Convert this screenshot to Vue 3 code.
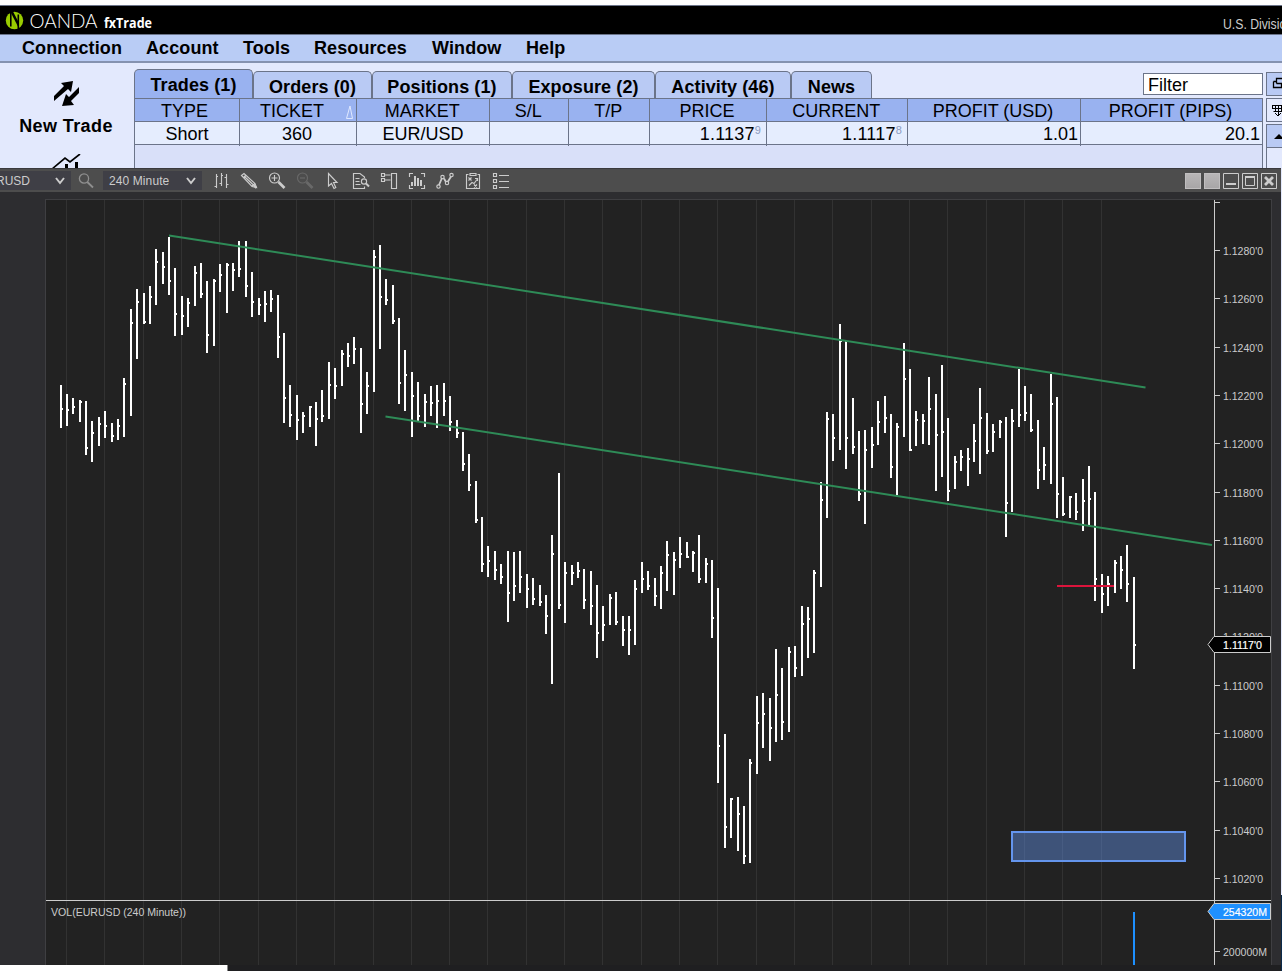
<template>
  <div class="desktop">
    <header class="title-bar">
      <svg class="brand" width="160" height="27" viewBox="0 0 160 27">
        <circle cx="14.5" cy="14.5" r="8.7" fill="#9c0" />
        <path d="M10.8 5.500V20.500M18.300 8.500V24" fill="none" stroke="#000" stroke-width="1.6" />
        <path d="M10.500 6L19 22.500V17L13 5.600Z" fill="#000" />
        <text x="29.5" y="21.6" class="brand-name" textLength="68" lengthAdjust="spacingAndGlyphs">OANDA</text>
        <text x="104" y="22" class="brand-product" textLength="48" lengthAdjust="spacingAndGlyphs">fxTrade</text>
      </svg>
      <svg class="division" width="60" height="27" viewBox="0 0 60 27">
        <text x="1" y="23" textLength="70" lengthAdjust="spacingAndGlyphs">U.S. Division</text>
      </svg>
    </header>

    <nav class="menu-bar">
      <span v-for="item in menu" :key="item">{{ item }}</span>
    </nav>

    <section class="workspace">
      <aside class="sidebar">
        <svg class="trade-icon" width="26" height="26" viewBox="0 0 26 26">
          <path d="M0 15L10 5L7 2L19 0L17 11L14 8L0 20Z" />
          <path d="M25 6L15 16L12 13L8 25L20 24L17 20L25 12Z" />
        </svg>
        <b>New Trade</b>
        <svg class="chart-icon" width="30" height="16" viewBox="0 0 30 16">
          <path d="M0 15L13 4L18 8L28 0" fill="none" stroke="#000" stroke-width="1.7" />
          <path d="M13 10h3v6h-3zM23 8h3v8h-3z" />
        </svg>
      </aside>

      <main class="main">
        <div class="tab-row">
          <div
            v-for="(tab, i) in tabs"
            :key="tab"
            class="tab"
            :class="{ active: i === 0 }"
          >{{ tab }}</div>
          <div class="filter">Filter</div>
        </div>
        <div class="table">
          <div v-for="(col, i) in columns" :key="col.name" class="col">
            <div class="cell head">
              {{ col.name }}
              <svg v-if="i === 1" class="sort" width="7" height="14" viewBox="0 0 7 14">
                <path d="M.5 13.5L4 1L6.5 13.5Z" fill="none" stroke="#dfe8ff" />
              </svg>
            </div>
            <div class="cell" :class="{ right: col.right }">{{ col.value }}<small v-if="col.pip">{{ col.pip }}</small></div>
          </div>
        </div>
      </main>

      <div class="side-tools">
        <div class="tool blue">
          <svg width="16" height="22" viewBox="0 0 16 22">
            <path d="M9.5 10.5v-5h9M9.5 10.5h9M6.5 8.5v6h8v-4M6.5 8.5h3" fill="none" stroke="#000" stroke-width="1.3" />
          </svg>
        </div>
        <div class="tool">
          <svg width="16" height="22" viewBox="0 0 16 22">
            <path d="M5.5 6.5h12M5.5 9.5h12M6.5 12.5h12M5.5 6v4M8.5 6v6M11.5 6v10M14.5 6v6M8 14l3 3l3-3" fill="none" stroke="#000" />
          </svg>
        </div>
        <div class="tool blue">
          <svg width="16" height="22" viewBox="0 0 16 22">
            <path d="M7 14L12 9L17 14Z" />
          </svg>
        </div>
        <div class="tool rest"></div>
      </div>
    </section>

    <section class="chart-row">
      <div class="chart-window">
        <div class="toolbar">
          <div class="select symbol">
            <span>EURUSD</span>
            <svg width="10" height="8" viewBox="0 0 10 8"><path d="M1 1L5 6L9 1" /></svg>
          </div>
          <svg class="search" width="20" height="20" viewBox="0 0 20 20">
            <circle cx="7" cy="7.5" r="4.6" />
            <path d="M10.300 11L16 16.500" stroke-width="1.8" />
          </svg>
          <div class="select interval">
            <span>240 Minute</span>
            <svg width="10" height="8" viewBox="0 0 10 8"><path d="M1 1L5 6L9 1" /></svg>
          </div>
          <div class="icons">
            <!-- bar style -->
            <svg viewBox="0 0 20 20"><path d="M6.500 4v14M11.500 3v13M16.500 4v14M4.500 16.500h2M6.500 6.500h1.500M9.500 13.500h2M11.500 5.500h1.500M14.500 7.500h2M16.500 14.500h2" /></svg>
            <!-- pencil -->
            <svg viewBox="0 0 20 20"><path d="M3.500 5.500L6 3.500L17 13.500L18.500 17.500L14 16.500ZM5.500 7.500L8 5.500M6 6L15.500 15M14 16L17 13.500" /><path d="M15.500 15l3 3" stroke-width="2" /></svg>
            <!-- zoom in -->
            <svg viewBox="0 0 20 20"><circle cx="8.500" cy="8" r="5" /><path d="M5.500 8h6M8.500 5v6" /><path d="M12.500 12L18.500 18" stroke-width="2.600" /></svg>
            <!-- zoom out -->
            <svg class="off" viewBox="0 0 20 20"><circle cx="8.500" cy="8" r="5" /><path d="M6 8h5" /><path d="M12.500 12L18.500 18" stroke-width="2.600" /></svg>
            <!-- pointer -->
            <svg viewBox="0 0 20 20"><path d="M6.500 3.500V16L9.500 13.500L12 18.500L13.800 17.500L11.500 12.500H15Z" /></svg>
            <!-- data box -->
            <svg viewBox="0 0 20 20"><path d="M14.500 16.500V18.500H3.500V3.500H10L14.500 7V8M5.500 8.500h4M5.500 11.500h4M5.500 14.500h5" /><circle cx="14" cy="11.500" r="2.600" /><path d="M16 13.500l3 3" stroke-width="2" /></svg>
            <!-- chart trader -->
            <svg viewBox="0 0 20 20"><path d="M3.500 3.500h3v3h-3zM3.500 8.500h3v3h-3zM6.500 5h6M6.500 10h6M13.500 3.500h5v15h-5z" /></svg>
            <!-- data series -->
            <svg viewBox="0 0 20 20"><path d="M3.500 7V3.500H7M15 3.500h3.500V7M3.500 15v3.500H7M15 18.500h3.500V15" /><path d="M6 12v4M9 6v10M12 8v8M15 10v6" stroke-width="2" /></svg>
            <!-- indicators -->
            <svg viewBox="0 0 20 20"><path d="M5 15L8 8M10 8.500L12 12M14 11.500L17 6.500" stroke-width="1.800" /><circle cx="4.500" cy="16.500" r="1.700" /><circle cx="8.500" cy="7" r="1.700" /><circle cx="13" cy="13" r="1.700" /><circle cx="17.500" cy="5" r="1.700" /></svg>
            <!-- strategies -->
            <svg viewBox="0 0 20 20"><path d="M6.500 4.500h-2v14h13v-14h-2M8 3.500h6v2h-6zM6.500 7.500l3 3M9.500 7.500l-3 3M7 15.500l3-3l2 1l3-4M13 8.500h2.500V11M12 14.500l3 3M15 14.500l-3 3" /></svg>
            <!-- properties -->
            <svg viewBox="0 0 20 20"><path d="M3.500 3.500h3v3h-3zM3.500 9.500h3v3h-3zM3.500 15.500h3v3h-3zM9 5.500h10M9 11.500h10M9 17.500h10" /></svg>
          </div>
          <div class="window-buttons">
            <i class="blank"></i>
            <i class="blank"></i>
            <svg viewBox="0 0 16 16"><path d="M.5.5h15v15H.5z" /><path d="M3 11h10" stroke-width="2" /></svg>
            <svg viewBox="0 0 16 16"><path d="M.5.5h15v15H.5zM3.500 3.500h9v9h-9z" /><path d="M3 4h10" stroke-width="2" /></svg>
            <svg viewBox="0 0 16 16"><path d="M.5.5h15v15H.5z" /><path d="M4 4l8 8M12 4l-8 8" stroke-width="2.800" /></svg>
          </div>
        </div>

        <svg class="plot" width="1281" height="773" viewBox="0 192 1281 773">
          <rect x="45" y="199" width="1227" height="767" fill="#3f3f42" />
          <rect x="46" y="200" width="1225" height="765" fill="#222" />
          <g shape-rendering="crispEdges">
            <rect v-for="k in 28" :key="k" :x="barX(6 * k - 5)" y="200" width="1" height="765" fill="#323232" />
            <g fill="#fff">
              <template v-for="(b, i) in bars" :key="i">
                <rect :x="barX(i)" :y="b[0]" width="2" :height="b[1] - b[0]" />
                <rect :x="barX(i) + 2" :y="b[2] - 1" width="1" height="2" />
              </template>
            </g>
          </g>
          <g stroke="#2e8b57" stroke-width="2">
            <path d="M169 235.500L1145.500 387.500" />
            <path d="M385.500 416.500L1212 545" />
          </g>
          <rect x="1057" y="585" width="57" height="2" fill="#dc143c" />
          <rect x="1012" y="832" width="173" height="29" fill="#6495ed" fill-opacity=".43" stroke="#6495ed" stroke-width="2" />
          <rect x="1133" y="912" width="2" height="53" fill="#1e90ff" />

          <g fill="#ccc" shape-rendering="crispEdges">
            <rect x="46" y="900" width="1225" height="1" />
            <rect x="1214" y="200" width="1" height="765" />
            <rect x="1215" y="202" width="5" height="1" />
            <rect v-for="p in prices" :key="p.label" x="1215" :y="p.y" width="5" height="1" />
            <rect x="1215" y="951" width="5" height="1" />
          </g>
          <g class="axis">
            <text v-for="p in prices" :key="p.label" x="1223" :y="p.y + 5" textLength="40" lengthAdjust="spacingAndGlyphs">{{ p.label }}</text>
            <text x="1223" y="956" textLength="44" lengthAdjust="spacingAndGlyphs">200000M</text>
            <text x="51" y="916" textLength="135" lengthAdjust="spacingAndGlyphs">VOL(EURUSD (240 Minute))</text>
          </g>
          <path d="M1208 644.500L1214 636.500H1270.500V652.500H1214Z" fill="#000" stroke="#ccc" />
          <text class="tag" x="1223" y="649" textLength="39" lengthAdjust="spacingAndGlyphs">1.1117'0</text>
          <path d="M1208 911.500L1214 903.500H1270.500V919.500H1214Z" fill="#1e90ff" stroke="#ccc" />
          <text class="tag" x="1223" y="916" textLength="44" lengthAdjust="spacingAndGlyphs">254320M</text>
        </svg>
        <div class="status"><div class="tooltip-edge"></div></div>
      </div>
      <div class="behind"></div>
    </section>
  </div>
</template>

<script setup>
const menu = ["Connection", "Account", "Tools", "Resources", "Window", "Help"];

const tabs = [
  "Trades (1)",
  "Orders (0)",
  "Positions (1)",
  "Exposure (2)",
  "Activity (46)",
  "News",
];

const columns = [
  { name: "TYPE", value: "Short" },
  { name: "TICKET", value: "360" },
  { name: "MARKET", value: "EUR/USD" },
  { name: "S/L", value: "" },
  { name: "T/P", value: "" },
  { name: "PRICE", value: "1.1137", pip: "9", right: true },
  { name: "CURRENT", value: "1.1117", pip: "8", right: true },
  { name: "PROFIT (USD)", value: "1.01", right: true },
  { name: "PROFIT (PIPS)", value: "20.1", right: true },
];

const prices = Array.from({ length: 14 }, (_, i) => ({
  label: (1.128 - i * 0.002).toFixed(4) + "'0",
  y: Math.floor(250.5 + i * 48.31),
}));

const barX = (i) => Math.floor(61 + 6.388 * i) - 1;

// [high, low, close]
const bars = [
  [385, 428, 409], [394, 426, 410], [398, 414, 407], [400, 422, 402], [401, 455, 448], [421, 462, 433],
  [417, 446, 424], [411, 438, 426], [423, 442, 436], [419, 440, 426], [378, 437, 384], [309, 416, 323],
  [289, 359, 302], [293, 324, 322], [286, 324, 297], [249, 305, 262], [252, 284, 267], [237, 295, 281],
  [268, 336, 314], [296, 335, 316], [298, 327, 303], [266, 306, 273], [263, 298, 294], [281, 353, 335],
  [279, 346, 281], [264, 292, 275], [263, 313, 265], [263, 291, 270], [241, 277, 269], [241, 297, 286],
  [272, 317, 302], [298, 315, 305], [291, 322, 304], [290, 312, 299], [295, 358, 337], [333, 423, 398],
  [385, 427, 415], [395, 440, 420], [412, 433, 416], [406, 427, 407], [402, 446, 419], [390, 422, 416],
  [362, 419, 385], [368, 399, 386], [350, 386, 354], [343, 367, 356], [337, 364, 349], [348, 433, 404],
  [372, 414, 386], [250, 392, 257], [245, 349, 297], [279, 305, 300], [285, 324, 321], [318, 404, 383],
  [350, 411, 375], [372, 437, 396], [382, 422, 416], [394, 427, 402], [386, 416, 403], [385, 428, 401],
  [383, 416, 401], [396, 431, 422], [420, 438, 433], [432, 471, 464], [454, 491, 485], [481, 523, 520],
  [517, 572, 564], [546, 577, 561], [551, 580, 570], [564, 584, 577], [551, 622, 593], [552, 601, 586],
  [551, 593, 577], [574, 608, 589], [578, 605, 599], [585, 606, 602], [595, 634, 616], [535, 684, 554],
  [473, 609, 605], [562, 623, 573], [565, 585, 573], [562, 578, 571], [569, 609, 600], [571, 625, 606],
  [585, 658, 633], [606, 641, 625], [594, 625, 598], [592, 625, 622], [616, 646, 630], [616, 655, 630],
  [580, 645, 589], [562, 593, 579], [571, 590, 586], [578, 606, 596], [566, 609, 573], [541, 591, 555],
  [552, 595, 560], [537, 568, 554], [542, 558, 557], [551, 572, 553], [535, 583, 579], [558, 583, 564],
  [560, 638, 618], [588, 783, 746], [734, 848, 827], [798, 838, 799], [797, 851, 814], [806, 864, 856],
  [759, 863, 763], [696, 774, 723], [693, 748, 714], [698, 761, 728], [649, 742, 695], [668, 740, 722],
  [647, 732, 652], [646, 677, 668], [606, 676, 624], [607, 658, 619], [570, 653, 573], [482, 587, 500],
  [412, 518, 419], [414, 461, 438], [324, 450, 341], [341, 469, 438], [398, 454, 447], [431, 501, 494],
  [430, 524, 450], [427, 468, 445], [401, 445, 422], [396, 433, 418], [414, 478, 467], [423, 495, 427],
  [343, 437, 379], [369, 451, 450], [411, 446, 420], [414, 444, 421], [377, 445, 409], [394, 491, 435],
  [365, 477, 432], [418, 501, 491], [456, 489, 462], [450, 471, 457], [448, 486, 459], [424, 462, 441],
  [388, 474, 418], [413, 454, 451], [424, 452, 432], [420, 438, 422], [417, 537, 503], [409, 512, 421],
  [369, 427, 415], [386, 421, 413], [394, 432, 430], [420, 489, 470], [447, 480, 465], [374, 484, 404],
  [397, 518, 494], [477, 516, 514], [496, 518, 497], [493, 520, 512], [479, 531, 501], [466, 526, 499],
  [492, 601, 579], [574, 613, 594], [576, 606, 584], [560, 593, 563], [556, 589, 570], [545, 602, 584],
  [577, 669, 645],
];
</script>

<style>
body {
  background: #fff;
}
</style>

<style scoped>
* {
  box-sizing: border-box;
}

.desktop {
  width: 1282px;
  height: 971px;
  overflow: hidden;
  display: flex;
  flex-direction: column;
  padding-top: 5px;
  font-family: "Liberation Sans", Arial, sans-serif;
  font-size: 18px;
  color: #000;
  background: #fff;
}

svg {
  display: block;
  flex: none;
}

.title-bar {
  height: 30px;
  flex: none;
  display: flex;
  justify-content: space-between;
  background: #000;
  border-top: 1px solid #6b7489;
  border-bottom: 1px solid #6b7489;
}

.brand-name {
  font: 300 20px Lato, sans-serif;
  fill: #fff;
}

.brand-product {
  font: 700 15px "Open Sans", sans-serif;
  fill: #fff;
}

.division text {
  font: 14px "Liberation Sans", sans-serif;
  fill: #ccc;
}

.menu-bar {
  height: 28px;
  flex: none;
  display: grid;
  grid-template-columns: 124px 97px 71px 118px 94px 60px;
  padding-left: 22px;
  line-height: 26px;
  font-weight: bold;
  letter-spacing: 0.1px;
  background: #b9ccf5;
  border-bottom: 2px solid #8592b0;
}

.workspace {
  height: 105px;
  flex: none;
  display: flex;
  overflow: hidden;
  background: #e3e9fd;
}

.sidebar {
  width: 134px;
  flex: none;
  display: flex;
  flex-direction: column;
  align-items: center;
  padding-top: 18px;
}

.sidebar b {
  margin: 8px 2px 0 0;
  line-height: 22px;
  letter-spacing: 0.4px;
}

.chart-icon {
  margin-top: 17px;
}

.main {
  width: 1129px;
  flex: none;
  display: flex;
  flex-direction: column;
}

.tab-row {
  height: 35px;
  flex: none;
  display: flex;
  align-items: flex-end;
}

.tab {
  height: 27px;
  padding-top: 1px;
  text-align: center;
  line-height: 28px;
  font-weight: bold;
  letter-spacing: 0.1px;
  background: #b9caf4;
  border: 1px solid #6b7489;
  border-bottom: none;
  border-radius: 5px 5px 0 0;
}

.tab.active {
  height: 29px;
  background: #99b2f0;
}

.tab:nth-child(1),
.tab:nth-child(2) {
  width: 119px;
}

.tab:nth-child(3) {
  width: 140px;
}

.tab:nth-child(4) {
  width: 143px;
}

.tab:nth-child(5) {
  width: 136px;
}

.tab:nth-child(6) {
  width: 81px;
}

.filter {
  width: 120px;
  height: 22px;
  margin: 0 0 3px auto;
  padding-left: 4px;
  line-height: 22px;
  background: #fff;
  border: 1px solid #6b7489;
}

.table {
  flex: 1;
  display: grid;
  grid-template-columns: 105px 117px 133px 79px 81px 117px 141px 173px 181px;
  border: 1px solid #6b7489;
  border-bottom: none;
  background: #d9e0f9;
}

.col {
  height: 47px;
  border-right: 1px solid #6b7489;
}

.col:last-child {
  border-right: none;
}

.cell {
  display: flex;
  justify-content: center;
  height: 23px;
  line-height: 24px;
  background: #e5edfe;
  border-bottom: 1px solid #6b7489;
  white-space: pre;
}

.cell.head {
  padding-left: 3px;
  background: #99b2f0;
}

.col:nth-child(1) .head {
  padding-left: 0;
}

.col:nth-child(2) .head {
  justify-content: space-between;
  padding: 0 3px 0 20px;
}

.col:nth-child(2) .cell:last-child {
  padding-right: 2px;
}

.sort {
  margin-top: 6px;
}

.cell.right {
  justify-content: flex-end;
  padding-right: 2px;
}

.cell.right small {
  font-size: 11px;
  line-height: 16px;
  color: #8c9cc0;
}

.col:nth-child(6) .right,
.col:nth-child(7) .right {
  padding-right: 5px;
  letter-spacing: 0.2px;
}

.side-tools {
  margin-left: 3px;
  padding-top: 9px;
}

.tool {
  width: 16px;
  height: 24px;
  margin-bottom: 2px;
  border: 1px solid #6b7489;
  border-right: none;
  overflow: hidden;
}

.tool.blue {
  background: #b9caf4;
}

.tool.rest {
  margin-top: -3px;
}

.chart-row {
  flex: 1;
  display: flex;
}

.chart-window {
  width: 1281px;
  background: #2d2d30;
}

.behind {
  width: 1px;
  background: linear-gradient(#e3e9fd 727px, #0b2a4a 727px);
}

.toolbar {
  height: 24px;
  display: flex;
  align-items: center;
  background: #4d4d4d;
  border-top: 1px solid #3a3a3d;
}

.select {
  height: 19px;
  display: flex;
  align-items: center;
  justify-content: space-between;
  padding: 0 6px;
  background: #3f3f46;
  color: #ccc;
  font-size: 12px;
  white-space: nowrap;
}

.select svg {
  fill: none;
  stroke: #ccc;
  stroke-width: 2;
}

.symbol {
  width: 71px;
  overflow: hidden;
  justify-content: flex-end;
  gap: 25px;
}

.interval {
  width: 99px;
  letter-spacing: 0.1px;
}

.search {
  margin: 0 6px;
  fill: none;
  stroke: #8f8f8f;
  stroke-width: 1.3;
}

.icons {
  display: flex;
  gap: 8px;
  margin: 0 0 2px 8px;
}

.icons svg {
  width: 20px;
  height: 20px;
  fill: none;
  stroke: #ccc;
  stroke-width: 1.15;
}

.icons .off {
  stroke: #696969;
}

.window-buttons {
  display: flex;
  gap: 3px;
  margin: 1px 4px 0 auto;
}

.window-buttons svg,
.blank {
  width: 16px;
  height: 16px;
  fill: none;
  stroke: #ccc;
}

.blank {
  background: linear-gradient(#b8b6b7, #a8a6a7);
  border: 1px solid #c0bebf;
}

.axis text {
  font-size: 11px;
  fill: #ccc;
}

.tag {
  font-size: 11px;
  fill: #fff;
  stroke: #fff;
  stroke-width: 0.2;
}

.status {
  height: 6px;
  background: #1f1f21;
}

.tooltip-edge {
  width: 228px;
  height: 6px;
  background: #fff;
  border-right: 1px solid #888;
}
</style>
